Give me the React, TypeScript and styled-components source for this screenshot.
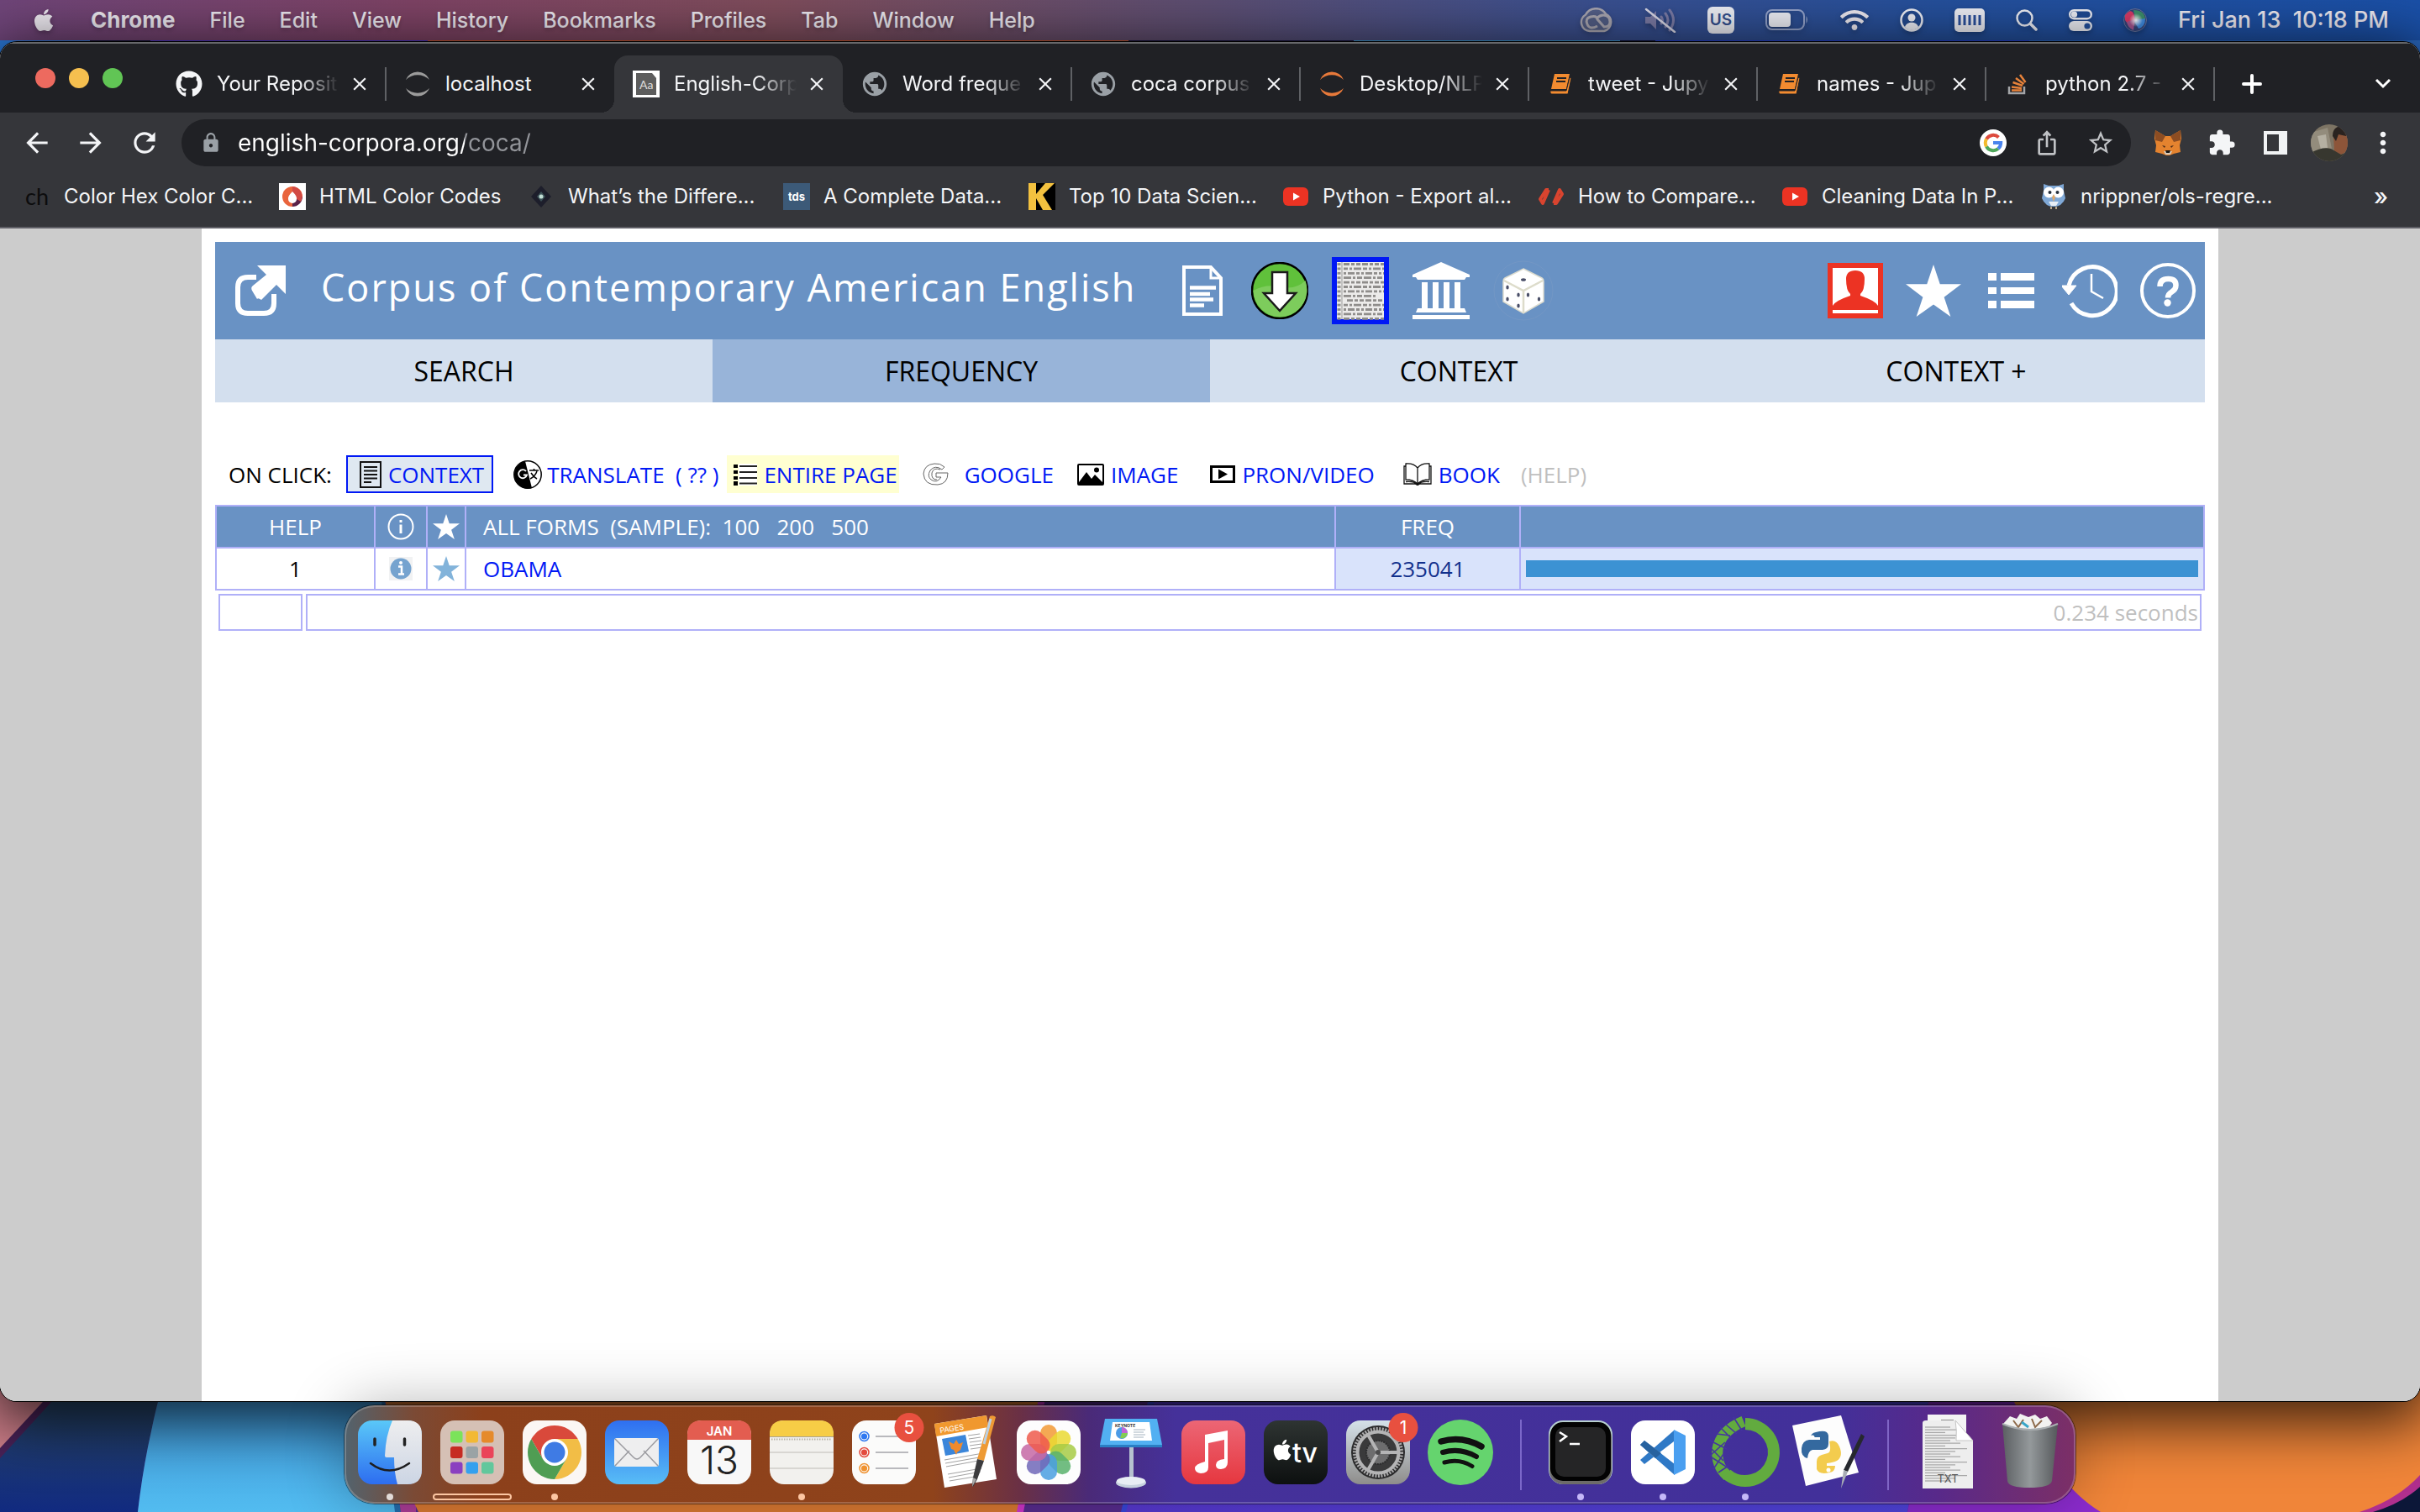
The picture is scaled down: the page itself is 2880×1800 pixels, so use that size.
import React from 'react';
import styled, { createGlobalStyle, css } from 'styled-components';
import { FaApple, FaGithub, FaWifi } from 'react-icons/fa';
import {
  MdArrowBack, MdArrowForward, MdClose, MdExtension, MdIosShare, MdLock,
  MdMoreVert, MdPublic, MdRefresh, MdStarBorder,
} from 'react-icons/md';

const UI = `Inter, "Liberation Sans", sans-serif`;
const PAGE = `"Open Sans", "Noto Sans", sans-serif`;

const c = {
  strip: '#202125',
  bar: '#35363a',
  chromeText: '#f4f5f7',
  header: '#6992c4',
  nav: '#d3dfee',
  navOn: '#98b4d9',
  line: '#b0b0f8',
  link: '#0018f5',
  faint: '#bfbfbf',
};

const Global = createGlobalStyle`
  *, *::before, *::after { box-sizing: border-box; }
  body { margin: 0; background: #14163a; }
  button { border: 0; padding: 0; margin: 0; background: none; color: inherit; font: inherit; }
  a { color: inherit; text-decoration: none; }
  svg { display: block; flex: none; }
`;

const Desktop = styled.div`
  display: flex;
  flex-direction: column;
  min-height: 100vh;
  overflow: hidden;
  font-family: ${UI};
  background: linear-gradient(90deg, #2b78d8 107px, #14163a 107px 179px, #4a35c8 179px 509px,
    #c8562e 509px 1343px, #1a1640 1343px 1611px, #3e9ad0 1611px 1928px, #14163a 1928px 1970px,
    #2540d0 1970px 2415px, #2a68c0 2415px);
`;

/* ---------- menu bar ---------- */

const MenuBar = styled.header`
  display: flex;
  align-items: center;
  justify-content: space-between;
  height: 48px;
  margin-bottom: 2px;
  padding: 0 37px;
  color: #eeeaf1;
  line-height: 32px;
  background: linear-gradient(90deg, #6f4579, #7e4365 17%, #7f4d5c 32%, #5c4e72 50%, #3a5090 66%, #25509c 80%, #1a50a8);
  svg { filter: drop-shadow(0 3px 3px rgba(0, 0, 0, 0.25)); }
`;
const Menus = styled.nav`
  display: flex;
  align-items: center;
  gap: 41px;
`;
const MenuItem = styled.button<{ $bold?: boolean }>`
  font-weight: ${(p) => (p.$bold ? 700 : 500)};
  font-size: ${(p) => (p.$bold ? 26 : 25)}px;
  text-shadow: 0 3px 4px rgba(0, 0, 0, 0.2);
`;
const StatusArea = styled.div`
  display: flex;
  align-items: center;
  gap: 37px;
`;
const Clock = styled.time`
  font-size: 27px;
  font-weight: 500;
  white-space: pre;
`;

/* ---------- browser window ---------- */

const Window = styled.section`
  position: relative;
  z-index: 1;
  display: flex;
  flex: 1;
  flex-direction: column;
  border-radius: 20px;
  overflow: hidden;
  background: #fff;
  box-shadow: 0 0 0 1px #000, 0 16px 70px 10px rgba(0, 0, 0, 0.75);
`;
const TabStrip = styled.div`
  display: flex;
  align-items: flex-end;
  height: 84px;
  padding-left: 42px;
  color: ${c.chromeText};
  background: ${c.strip};
  border-top: 2px solid #67686b;
`;
const Lights = styled.div`
  display: flex;
  gap: 16px;
  width: 145px;
  padding-bottom: 29px;
`;
const Light = styled.button<{ $color: string }>`
  width: 24px;
  height: 24px;
  border-radius: 50%;
  background: ${(p) => p.$color};
`;
const Tab = styled.div<{ $active?: boolean; $line?: boolean }>`
  position: relative;
  display: flex;
  align-items: center;
  width: 272px;
  height: 68px;
  padding: 0 18px 0 22px;
  border-radius: 16px 16px 0 0;
  ${(p) => p.$line && css`
    &::after {
      content: '';
      position: absolute;
      right: -1px;
      top: 14px;
      width: 2px;
      height: 40px;
      background: #5f6165;
    }
  `}
  ${(p) => p.$active && css`
    background: ${c.bar};
    &::before, &::after {
      content: '';
      position: absolute;
      bottom: 0;
      width: 16px;
      height: 16px;
    }
    &::before { left: -16px; background: radial-gradient(circle at 0 0, transparent 16px, ${c.bar} 16px); }
    &::after { right: -16px; background: radial-gradient(circle at 100% 0, transparent 16px, ${c.bar} 16px); }
  `}
`;
const TabIcon = styled.span`
  display: flex;
  flex: none;
  justify-content: center;
  width: 32px;
`;
const TabTitle = styled.button<{ $fade: boolean }>`
  flex: 1;
  min-width: 0;
  margin: 0 8px 0 17px;
  overflow: hidden;
  white-space: nowrap;
  text-align: left;
  font-size: 24px;
  font-weight: 400;
  line-height: 32px;
  ${(p) => p.$fade && css`mask-image: linear-gradient(90deg, #000 66%, transparent 98%);`}
`;
const StripButton = styled.button<{ $end?: boolean }>`
  display: flex;
  align-items: center;
  height: 68px;
  margin-left: ${(p) => (p.$end ? 'auto' : '32px')};
  margin-right: ${(p) => (p.$end ? '33px' : '0')};
`;

const Toolbar = styled.div`
  display: flex;
  align-items: center;
  height: 72px;
  padding: 0 12px;
  color: ${c.chromeText};
  background: ${c.bar};
`;
const ToolButton = styled.button`
  display: flex;
  align-items: center;
  justify-content: center;
  width: 64px;
  height: 56px;
`;
const Omnibox = styled.form`
  display: flex;
  flex: 1;
  align-items: center;
  height: 56px;
  margin: 0 12px;
  padding: 0 4px 0 22px;
  border-radius: 28px;
  color: #c0c2c5;
  background: ${c.strip};
`;
const Address = styled.input`
  flex: 1;
  min-width: 0;
  height: 56px;
  margin-left: 19px;
  padding: 0;
  border: 0;
  outline: 0;
  font: 400 28px/56px ${UI};
  color: #fff;
  background: linear-gradient(90deg, #fff 270px, #93959a 270px);
  background-clip: text;
  -webkit-text-fill-color: transparent;
`;
const BookmarkBar = styled.nav`
  display: flex;
  align-items: center;
  height: 66px;
  padding: 0 38px 8px 28px;
  color: ${c.chromeText};
  background: ${c.bar};
  border-bottom: 2px solid #5f5f66;
`;
const Bookmark = styled.a<{ $w: number }>`
  display: flex;
  align-items: center;
  gap: 16px;
  width: ${(p) => p.$w}px;
  white-space: nowrap;
  font-size: 24px;
  font-weight: 400;
  line-height: 32px;
`;
const More = styled.button`
  margin-left: auto;
  font-size: 28px;
  font-weight: 500;
`;

/* ---------- corpus page ---------- */

const Viewport = styled.main`
  display: flex;
  flex: 1;
  padding: 0 240px;
  background: #ccc;
`;
const Sheet = styled.div`
  flex: 1;
  min-width: 0;
  padding: 16px;
  background: #fff;
  font-family: ${PAGE};
  font-size: 26px;
  line-height: 36px;
  color: #000;
`;
const Banner = styled.header`
  display: flex;
  align-items: center;
  height: 116px;
  padding: 0 11px 0 24px;
  color: #fff;
  background: ${c.header};
`;
const Title = styled.h1`
  margin: 0 49px 8px 42px;
  font-size: 45px;
  font-weight: 500;
  line-height: 60px;
  letter-spacing: 2px;
  white-space: nowrap;
`;
const IconRow = styled.div<{ $right?: boolean }>`
  display: flex;
  align-items: center;
  gap: ${(p) => (p.$right ? 27 : 28)}px;
  ${(p) => p.$right && 'margin-left: auto;'}
`;
const PageTabs = styled.nav`
  display: grid;
  grid-template-columns: repeat(4, 1fr);
  margin-bottom: 63px;
`;
const PageTab = styled.a<{ $on?: boolean }>`
  height: 75px;
  text-align: center;
  font-size: 32px;
  line-height: 76px;
  background: ${(p) => (p.$on ? c.navOn : c.nav)};
`;
const Actions = styled.div`
  display: flex;
  align-items: center;
  height: 45px;
  margin-bottom: 14px;
  padding-left: 16px;
  white-space: pre;
`;
const Action = styled.a<{ $lead: number; $look?: 'boxed' | 'marked'; $gap?: number }>`
  display: flex;
  align-items: center;
  gap: ${(p) => p.$gap ?? 8}px;
  height: 45px;
  margin-left: ${(p) => p.$lead}px;
  color: ${c.link};
  ${(p) => p.$look === 'boxed' && css`
    padding: 0 9px 0 14px;
    border: 2px solid ${c.link};
    background: #dfe8f1;
  `}
  ${(p) => p.$look === 'marked' && css`
    padding: 0 2px 0 8px;
    background: #ffffd1;
  `}
`;
const Hint = styled.a`
  margin-left: 25px;
  color: ${c.faint};
`;
const Results = styled.table`
  width: 100%;
  table-layout: fixed;
  border-collapse: collapse;
  th, td {
    height: 50px;
    padding: 0;
    border: 2px solid ${c.line};
    font-weight: 400;
    text-align: center;
  }
  th { color: #fff; background: ${c.header}; }
  svg { margin: 0 auto; }
`;
const Col = styled.col<{ $w?: number }>`
  ${(p) => p.$w && `width: ${p.$w}px;`}
`;
const WordHead = styled.th`
  && { padding-left: 20px; text-align: left; white-space: pre; }
`;
const WordCell = styled.td`
  && { padding-left: 20px; text-align: left; color: ${c.link}; }
`;
const FreqCell = styled.td`
  color: #12308c;
  background: #d9e3fb;
`;
const BarCell = styled.td`
  && { padding: 0 6px; }
  background: #d9e3fb;
`;
const Bar = styled.div`
  height: 20px;
  background: #3c92d3;
`;
const Timing = styled.footer`
  display: flex;
  gap: 4px;
  padding: 4px;
`;
const TimingBox = styled.div<{ $grow?: boolean }>`
  ${(p) => (p.$grow ? 'flex: 1;' : 'width: 100px;')}
  height: 44px;
  padding: 0 2px;
  border: 2px solid ${c.line};
  color: ${c.faint};
  text-align: right;
  line-height: 40px;
`;

/* ---------- dock ---------- */

const DockArea = styled.footer`
  position: relative;
  display: flex;
  align-items: flex-start;
  justify-content: center;
  height: 132px;
  padding-top: 5px;
`;
const Wallpaper = styled.svg`
  position: absolute;
  left: 0;
  bottom: 0;
  width: 100%;
  height: 156px;
`;
const Dock = styled.nav`
  position: relative;
  z-index: 2;
  display: flex;
  align-items: flex-start;
  padding: 6px 3px 2px;
  border: 2px solid rgba(255, 255, 255, 0.2);
  border-radius: 36px;
  background: linear-gradient(90deg, #52636e, #7b4a35 4%, #8c401b 8%, #8f431b 34%, #6a3045 39%, #4a2a78 43%,
    #45319a 48%, #42309a 86%, #58298a 92%, #7c2f66);
  background-clip: border-box;
  background-origin: border-box;
  box-shadow: 0 0 0 1px rgba(0, 0, 0, 0.45), 0 0 70px rgba(0, 0, 0, 0.3);
`;
const DockItem = styled.button`
  display: flex;
  flex-direction: column;
  align-items: center;
  width: 98px;
  height: 105px;
`;
const Dot = styled.span<{ $wide?: boolean; $tint: string }>`
  width: ${(p) => (p.$wide ? 94 : 8)}px;
  height: 8px;
  margin-top: 1px;
  border-radius: 4px;
  ${(p) => (p.$wide ? `border: 2px solid ${p.$tint};` : `background: ${p.$tint};`)}
`;
const Divider = styled.span`
  width: 2px;
  height: 84px;
  margin: 9px 21px 0 22px;
  background: rgba(170, 150, 240, 0.55);
`;

/* ---------- menu bar icons ---------- */

const CreativeCloud = () => (
  <svg width="40" height="30" viewBox="0 0 40 30" fill="none" stroke="#aaa7b1" strokeWidth="2.500">
    <path d="M12 28a10.500 10.500 0 0 1-5-19.500 14 14 0 0 1 24-1 11 11 0 0 1-2 20.500z" fill="#8f8d99" fillOpacity=".35" />
    <path d="M21 22q-9 5-12-2t4-9 8 3l8 9q7 0 7-6 0-8-8-8-4 0-8 4" strokeWidth="3" />
  </svg>
);
const Muted = () => (
  <svg width="38" height="30" viewBox="0 0 38 30" fill="none" stroke="#7b7ba5" strokeWidth="3" strokeLinecap="round">
    <path d="M1 11h6l7-7v22l-7-7H1z" fill="#7b7ba5" stroke="none" />
    <path d="M20 11q3 4 0 8M25 7q6 8 0 16M30 3q9 12 0 24" />
    <path d="M2 2l34 27" stroke="#d9d8e6" strokeWidth="2.500" />
  </svg>
);
const Badge = styled.span`
  width: 32px;
  border-radius: 6px;
  color: #35508e;
  background: #eeeff6;
  text-align: center;
  font-size: 19px;
  font-weight: 600;
  line-height: 32px;
`;
const Battery = () => (
  <svg width="52" height="26" viewBox="0 0 52 26">
    <rect x="1" y="1" width="45" height="23" rx="7" fill="none" stroke="#94a3cb" strokeWidth="2" />
    <rect x="4" y="4" width="26" height="17" rx="4" fill="#eeeff6" />
    <path d="M48.500 8q3 4 0 9z" fill="#94a3cb" />
  </svg>
);
const UserRing = () => (
  <svg width="28" height="28" viewBox="0 0 28 28" fill="none" stroke="#eeeff6" strokeWidth="2.500">
    <circle cx="14" cy="14" r="12.500" />
    <circle cx="14" cy="11" r="4.500" fill="#eeeff6" stroke="none" />
    <path d="M6 22c2-7 14-7 16 0-4 5-12 5-16 0z" fill="#eeeff6" stroke="none" />
  </svg>
);
const Memory = () => (
  <svg width="36" height="28" viewBox="0 0 36 28">
    <rect width="36" height="28" rx="5" fill="#eeeff6" />
    <path d="M6 8v12M12 8v12M18 8v12M24 8v12M30 8v12" stroke="#2a509c" strokeWidth="3" />
  </svg>
);
const Search = () => (
  <svg width="26" height="26" viewBox="0 0 26 26" fill="none" stroke="#eeeff6" strokeLinecap="round">
    <circle cx="10.500" cy="10.500" r="9" strokeWidth="2.500" />
    <path d="M17.500 17.500l6.500 6.500" strokeWidth="3.500" />
  </svg>
);
const ControlCenter = () => (
  <svg width="28" height="26" viewBox="0 0 28 26">
    <rect x="1.200" y="1.200" width="25.600" height="10" rx="5" fill="none" stroke="#eeeff6" strokeWidth="2.400" />
    <circle cx="6.500" cy="6.200" r="3.600" fill="#eeeff6" />
    <rect y="14" width="28" height="12" rx="6" fill="#eeeff6" />
    <circle cx="22" cy="20" r="3.600" fill="#23509d" />
  </svg>
);
const Siri = () => (
  <svg width="28" height="28" viewBox="0 0 28 28">
    <defs>
      <radialGradient id="siri"><stop offset="0" stopColor="#fff" /><stop offset="1" stopColor="#fff" stopOpacity="0" /></radialGradient>
    </defs>
    <circle cx="14" cy="14" r="13.500" fill="#34457c" stroke="#65739c" />
    <path d="M2 8q10-12 12 6-6 10-12 0z" fill="#d83b67" />
    <path d="M12 2q14 0 14 12l-12-2z" fill="#3d8f6b" />
    <path d="M12 14l14-2q0 10-8 12z" fill="#3f8be0" />
    <path d="M4 16l10-3-2 13q-7-3-8-10z" fill="#a45590" />
    <circle cx="15" cy="14" r="8" fill="url(#siri)" />
  </svg>
);

/* ---------- browser icons ---------- */

const Globe = () => <MdPublic size={34} color="#9aa0a6" />;
const Ring = ({ color }: { color: string }) => (
  <svg width="32" height="32" viewBox="0 0 32 32" fill={color}>
    <path d="M2 11a15 15 0 0 1 28 0 20 20 0 0 0-28 0z" />
    <path d="M2 21a15 15 0 0 0 28 0 20 20 0 0 1-28 0z" />
  </svg>
);
const AaIcon = () => (
  <svg width="32" height="32" viewBox="0 0 32 32">
    <rect width="32" height="32" fill="#fff" />
    <path d="M4 3h19l5 6v20H4z" fill="#5d5d5d" />
    <text x="8" y="22" fontFamily="Lato, sans-serif" fontSize="14" fill="#ddd">Aa</text>
  </svg>
);
const NotebookIcon = () => (
  <svg width="32" height="32" viewBox="0 0 32 32" fill="#f28b30">
    <path d="M9 4h18l-4 18H5z" />
    <path d="M12 9h11M11 13h11" stroke="#202125" strokeWidth="2" />
    <path d="M4 24h19l4-16 2 1-4 19H5q-2-2-1-4z" stroke="#202125" strokeWidth="1" />
  </svg>
);
const StackIcon = () => (
  <svg width="32" height="32" viewBox="0 0 32 32" fill="none" strokeWidth="2.500">
    <path d="M6 19v8h18v-8" stroke="#a3a5a8" />
    <path d="M9 23.500h12M9 19.500l12 1.500M10.500 14l11.500 4M14 9l9.500 7M19 5l6.500 9" stroke="#e7823a" />
  </svg>
);
const GoogleG = () => (
  <svg width="32" height="32" viewBox="0 0 32 32" fill="none" strokeWidth="4">
    <circle cx="16" cy="16" r="16" fill="#fff" />
    <path d="M8 11.500a9.300 9.300 0 0 1 14.500-2" stroke="#dd4b3e" />
    <path d="M8 11.500a9.300 9.300 0 0 0 0 9" stroke="#f3bb2e" />
    <path d="M8 20.500a9.300 9.300 0 0 0 14 2.500" stroke="#4fa75b" />
    <path d="M22 23a9.300 9.300 0 0 0 3.200-7H16" stroke="#4a84ee" />
  </svg>
);
const Fox = () => (
  <svg width="32" height="30" viewBox="0 0 32 30">
    <path d="M1 0l12 7h6l12-7 1 10-2 8 1 8-8 2-5 2h-4l-5-2-8-2 1-8-2-8z" fill="#e4832f" />
    <path d="M1 0l12 7-4 7-8-2zM31 0L19 7l4 7 8-2z" fill="#8d4d22" />
    <path d="M9 18l4 1-1 2zM23 18l-4 1 1 2z" fill="#4a2b18" />
    <path d="M11 25h10l-2 4h-6z" fill="#d8c9b8" />
    <path d="M13 24h6l-1 3h-4z" fill="#161616" />
  </svg>
);
const SidePanel = () => (
  <svg width="28" height="28" viewBox="0 0 28 28"><path fill="#f1f3f4" fillRule="evenodd" d="M0 0h28v28H0zM4 4v20h14V4z" /></svg>
);
const Avatar = () => (
  <svg width="44" height="44" viewBox="0 0 44 44">
    <defs><clipPath id="face"><circle cx="22" cy="22" r="22" /></clipPath></defs>
    <g clipPath="url(#face)">
      <rect width="44" height="44" fill="#7d7464" />
      <path d="M0 10l20-6 6 30H0z" fill="#938c7c" />
      <path d="M8 14l10-2 2 16-8 2z" fill="#b5b0a2" />
      <path d="M27 12q4-8 12-4l5 6v18l-8 4-8-4z" fill="#8d5539" />
      <path d="M26 14q0-12 12-12l6 6-2 6-9-2-3 8z" fill="#2a2320" />
      <path d="M0 34q14-8 24-5l12 7 8-3v11H0z" fill="#37372f" />
    </g>
  </svg>
);
const ChIcon = () => (
  <svg width="32" height="32" viewBox="0 0 32 32"><text x="2" y="26" fontFamily="Lato, sans-serif" fontSize="27" fill="#0c0c0d">ch</text></svg>
);
const CodesIcon = () => (
  <svg width="32" height="32" viewBox="0 0 32 32">
    <rect width="32" height="32" fill="#fff" />
    <path d="M16 4a12 12 0 0 0 0 24z" fill="#e9643c" />
    <path d="M16 4a12 12 0 0 1 12 12H16z" fill="#ef6a3d" />
    <path d="M28 16a12 12 0 0 1-12 12V16z" fill="#5a2148" />
    <path d="M16 4a12 12 0 0 1 10 18l-10-6z" fill="#d24a44" />
    <path d="M16 10q6 6 5 9a5 5 0 0 1-10 0q-1-3 5-9z" fill="#fff" />
  </svg>
);
const GemIcon = () => (
  <svg width="32" height="32" viewBox="0 0 32 32">
    <path d="M16 3l12 13-12 13L4 16z" fill="#1d1e2b" />
    <path d="M16 10l5 6-5 6-5-6z" fill="#3d5358" />
    <circle cx="16" cy="16" r="2.500" fill="#c2e0d6" />
  </svg>
);
const TdsIcon = () => (
  <svg width="32" height="32" viewBox="0 0 32 32">
    <rect width="32" height="32" fill="#3c5a78" />
    <text x="16" y="21" textAnchor="middle" fontFamily="Inter, sans-serif" fontWeight="700" fontSize="13" fill="#fff">tds</text>
  </svg>
);
const KIcon = () => (
  <svg width="32" height="32" viewBox="0 0 32 32">
    <rect width="32" height="32" fill="#000" />
    <path d="M0 0h9v13L20 0h11L17 14l11 18H17L9 18v14H0z" fill="#f3c13f" />
  </svg>
);
const TubeIcon = () => (
  <svg width="32" height="32" viewBox="0 0 32 32">
    <rect x="1" y="5" width="30" height="22" rx="6" fill="#ec3323" />
    <path d="M13 11.500l8 4.500-8 4.500z" fill="#fff" />
  </svg>
);
const SlashIcon = () => (
  <svg width="32" height="32" viewBox="0 0 32 32" fill="none" stroke="#d9442f" strokeWidth="4" strokeLinejoin="round">
    <path d="M13 8h-3L3 19l3 5 7-16" />
    <path d="M19 24h3l7-11-3-5-7 16" />
  </svg>
);
const OwlIcon = () => (
  <svg width="32" height="32" viewBox="0 0 32 32">
    <path d="M4 1l6 2h12l6-2v8l2 9q-4 10-14 10T2 18l2-9z" fill="#7fa8d6" />
    <circle cx="10.500" cy="11" r="6.500" fill="#fff" /><circle cx="21.500" cy="11" r="6.500" fill="#fff" />
    <circle cx="11.500" cy="11" r="2" fill="#26303c" /><circle cx="20.500" cy="11" r="2" fill="#26303c" />
    <path d="M16 13l2 4-2 5-2-5z" fill="#e0a86a" />
    <path d="M10 22h12l-3 5h-6z" fill="#e8eef5" />
    <path d="M13 28v3M19 28v3" stroke="#b9a68a" strokeWidth="2" />
  </svg>
);

/* ---------- corpus page icons ---------- */

const ShareOut = () => (
  <svg width="60" height="60" viewBox="0 0 60 60">
    <path d="M25 14H15q-12 0-12 12v19q0 12 12 12h19q12 0 12-12V34" fill="none" stroke="#fff" strokeWidth="6" />
    <path d="M26 0h34v34L49 23 31 41q-4-3-5-1l-6-10q-2-4 1-6l16-13z" fill="#fff" />
  </svg>
);
const DocIcon = () => (
  <svg width="60" height="60" viewBox="0 0 60 60" fill="none" stroke="#fff">
    <path d="M8 2h32l12 13v43H8z" strokeWidth="4" />
    <path d="M40 2v13h13" strokeWidth="3" />
    <path d="M15 26.500h31M15 34h24M15 40.500h28M15 47.500h17" strokeWidth="4.500" />
  </svg>
);
const DownloadIcon = () => (
  <svg width="68" height="68" viewBox="0 0 68 68">
    <circle cx="34" cy="34" r="33" fill="#60c13b" stroke="#000" strokeWidth="2.500" />
    <path d="M2.500 34q14-8 30-5 20 5 32-7a32 32 0 1 1-62 12z" fill="#7dcc5c" />
    <path d="M25 12h18v25h10L34 58 15 37h10z" fill="#fff" stroke="#1a1a1a" strokeWidth="2.500" />
  </svg>
);
const NewsIcon = () => {
  const rows = Array.from({ length: 13 }, (_, i) => i);
  return (
    <svg width="68" height="80" viewBox="0 0 68 80">
      <rect width="68" height="80" fill={c.link} />
      <rect x="6" y="6" width="56" height="68" fill="#ecebea" />
      <path d="M12 6v68" stroke="#999" />
      {rows.map((i) => (
        <g key={i} stroke="#8f8d8b" strokeWidth="2.800">
          <path d={`M6.500 ${8.500 + i * 5.400}h4`} />
          <path
            d={`M${i === 8 ? 18 : 14} ${8.500 + i * 5.400}H${i === 7 ? 52 : 62}`}
            strokeDasharray={['7 2 4 2 5 2', '5 2 3 2 9 2', '3 2 8 2 4 2', '9 2 3 2 6 2'][i % 4]}
          />
        </g>
      ))}
    </svg>
  );
};
const BankIcon = () => (
  <svg width="68" height="68" viewBox="0 0 68 68" fill="#fff">
    <path d="M34 0l34 15v3h-4l-2 3H6l-2-3H0v-3z" />
    <path d="M11 24h7v31h-7zM24 24h7v31h-7zM37 24h7v31h-7zM50 24h7v31h-7z" />
    <path d="M6 55h56l2 5H4zM0 63h68v5H0z" />
  </svg>
);
const DiceIcon = () => (
  <svg width="72" height="72" viewBox="0 0 72 72">
    <circle cx="36" cy="36" r="35" fill="none" stroke="#7397c5" />
    <path d="M36 10l22 11q2 1 2 4v24L36 63 12 49V25q0-3 2-4z" fill="#fff" stroke="#dcdccf" strokeWidth="1.500" />
    <path d="M13 24l23 12 23-12M36 36v26" fill="none" stroke="#dddccb" strokeWidth="2.500" />
    <g fill="#4a4f68">
      <ellipse cx="36" cy="23" rx="3" ry="1.800" />
      <ellipse cx="17" cy="32" rx="1.700" ry="2.500" /><ellipse cx="30" cy="41" rx="1.700" ry="2.500" />
      <ellipse cx="17" cy="46" rx="1.700" ry="2.500" /><ellipse cx="30" cy="54" rx="1.700" ry="2.500" />
      <ellipse cx="41.500" cy="41" rx="1.700" ry="2.500" /><ellipse cx="54.500" cy="46" rx="1.700" ry="2.500" />
    </g>
  </svg>
);
const PersonIcon = () => (
  <svg width="66" height="66" viewBox="0 0 66 66">
    <rect x="3" y="3" width="60" height="60" fill="#fff" stroke="#ec3323" strokeWidth="6" />
    <path d="M22 19q0-10 11-10t11 10q0 14-5 18v2q18 6 21 12v5H6v-5q3-6 21-12v-2q-5-4-5-18z" fill="#ec3323" />
  </svg>
);
const Star = ({ size, color }: { size: number; color: string }) => (
  <svg width={size} height={size} viewBox="0 0 68 66"><path fill={color} d="M34 1l8 24h26L47 41l8 24-21-15-21 15 8-24L0 25h26z" /></svg>
);
const ListIcon = () => (
  <svg width="66" height="66" viewBox="0 0 66 66" fill="#fff">
    <path d="M5 12h10v9H5zM20 12h40v9H20zM5 29h10v8H5zM20 29h40v8H20zM5 45h10v9H5zM20 45h40v9H20z" />
  </svg>
);
const HistoryIcon = () => (
  <svg width="66" height="66" viewBox="0 0 66 66" fill="none" stroke="#fff">
    <path d="M8 27a29 29 0 1 1 3 21" strokeWidth="5" />
    <path d="M-1 27h18L8 38z" fill="#fff" strokeWidth="1" />
    <path d="M35 13v21l14 8" strokeWidth="2.500" />
  </svg>
);
const QuestionIcon = () => (
  <svg width="66" height="66" viewBox="0 0 66 66" fill="none" stroke="#fff">
    <circle cx="33" cy="33" r="31" strokeWidth="4" />
    <path d="M23.500 28q0-9 10-9 9 0 9 7.500 0 5-5 8-4.500 2.500-4.500 7" strokeWidth="6.500" />
    <circle cx="32.500" cy="47.500" r="4.200" fill="#fff" stroke="none" />
  </svg>
);
const ContextGlyph = () => (
  <svg width="26" height="32" viewBox="0 0 26 32" fill="none" stroke="#111" strokeWidth="2">
    <rect x="1" y="1" width="24" height="30" />
    <path d="M5 7h16M5 11.500h16M5 16h16M5 20.500h16M5 25h9" />
  </svg>
);
const TranslateGlyph = () => (
  <svg width="34" height="34" viewBox="0 0 34 34">
    <circle cx="17" cy="17" r="16.200" fill="#fff" stroke="#000" strokeWidth="1.500" />
    <path d="M14 1l8 32A16.500 16.500 0 1 1 14 1z" fill="#000" />
    <path d="M15 13a5 5 0 1 0 1 4.500h-4" fill="none" stroke="#fff" strokeWidth="1.800" />
    <path d="M19 12h11M24.500 10v2M28 13q-2 6-8 9M21 15q3 5 7 7" fill="none" stroke="#000" strokeWidth="1.500" />
  </svg>
);
const ListGlyph = () => (
  <svg width="28" height="26" viewBox="0 0 28 26">
    <rect x="6" width="22" height="26" fill="#fff" />
    <path d="M7 3h21M7 10h21M7 17h21M7 23.500h21" stroke="#222" strokeWidth="2" />
    <path d="M0 1h5v4H0zM0 8h5v4H0zM0 15h5v4H0zM0 21h5v5H0z" fill="#000" />
  </svg>
);
const GoogleGlyph = () => (
  <svg width="32" height="27" viewBox="0 0 32 27" fill="none" stroke="#666" strokeWidth="1">
    <path d="M26 5l-3 3q-8-6-14 1-4 7 1 11 7 5 12-3h-6v-5h14q0 13-12 14-16 1-17-13Q2 2 14 1q7-1 12 4z" />
    <path d="M21 8q-8-3-10 4-1 8 6 8" />
  </svg>
);
const ImageGlyph = () => (
  <svg width="32" height="26" viewBox="0 0 32 26">
    <rect x="1" y="1" width="30" height="24" rx="1" fill="#fff" stroke="#000" strokeWidth="2" />
    <path d="M2 22l9-12 6 8 4-5 9 9v3H2z" fill="#000" />
    <circle cx="23" cy="7.500" r="3" fill="#000" />
  </svg>
);
const VideoGlyph = () => (
  <svg width="30" height="21" viewBox="0 0 30 21">
    <rect x="1.500" y="1.500" width="27" height="18" fill="#fff" stroke="#000" strokeWidth="3" />
    <path d="M10 4.500l11 6-11 6z" fill="#000" />
  </svg>
);
const BookGlyph = () => (
  <svg width="34" height="27" viewBox="0 0 34 27" fill="none" stroke="#111" strokeWidth="1.300">
    <path d="M17 6q-5-6-14-5v19q9 0 14 5 5-5 14-5V1q-9-1-14 5zM17 6v19" />
    <path d="M3 4H1v21h13l3 1.500 3-1.500h13V4h-2M3 22.500q9-1 14 3 5-4 14-3" />
  </svg>
);
const InfoOutline = () => (
  <svg width="32" height="32" viewBox="0 0 32 32" fill="none" stroke="#fff" strokeWidth="2">
    <circle cx="16" cy="16" r="14.500" />
    <path d="M16 13.500V24" strokeWidth="3" /><path d="M16 8v3" strokeWidth="3" />
  </svg>
);
const InfoSolid = () => (
  <svg width="28" height="28" viewBox="0 0 28 28">
    <rect width="28" height="28" fill="#f1f2f3" />
    <circle cx="14" cy="14" r="12.500" fill="#75a3cf" />
    <path d="M11 11.500h4v9M11 20.500h7" stroke="#fff" strokeWidth="2.500" fill="none" />
    <circle cx="14" cy="7" r="2" fill="#fff" />
  </svg>
);

/* ---------- dock icons: every tile is 76 units wide, with room around it ---------- */

const Icon = ({ children }: { children: React.ReactNode }) => (
  <svg width="96" height="96" viewBox="-10 -10 96 96">{children}</svg>
);
const Tile = ({ fill }: { fill: string }) => <rect width="76" height="76" rx="17" fill={fill} />;
const Count = ({ n }: { n: string }) => (
  <>
    <circle cx="68" cy="8.500" r="17.500" fill="#e8503f" />
    <text x="68" y="16" textAnchor="middle" fontFamily={UI} fontSize="21" fill="#fff">{n}</text>
  </>
);

const Finder = () => (
  <Icon>
    <defs>
      <linearGradient id="fb" x2="0" y2="1"><stop stopColor="#5ac8f8" /><stop offset="1" stopColor="#2d6df0" /></linearGradient>
      <linearGradient id="fw" x2="0" y2="1"><stop stopColor="#eeeeef" /><stop offset="1" stopColor="#ccd5e4" /></linearGradient>
    </defs>
    <Tile fill="url(#fb)" />
    <path d="M41 0h18q17 0 17 17v42q0 17-17 17H47q-4-14-4-32H34q-2 0-2-2 1-24 9-42z" fill="url(#fw)" />
    <path d="M20 22v7M55.500 22v7" stroke="#222" strokeWidth="3.500" strokeLinecap="round" />
    <path d="M15 51q22 17 46 0" fill="none" stroke="#1d1d1f" strokeWidth="2.500" strokeLinecap="round" />
  </Icon>
);
const pads = ['#7be35a', '#f2b935', '#e58a2b', '#c62b22', '#9aa3a5', '#ea4459', '#8a3fc0', '#35a0ee', '#62c79c'];
const Launchpad = () => (
  <Icon>
    <Tile fill="#d5c0b5" />
    {pads.map((f, i) => <rect key={f} x={12 + (i % 3) * 18.500} y={12.500 + Math.floor(i / 3) * 18.500} width="14.500" height="14" rx="3" fill={f} />)}
  </Icon>
);
const ChromeApp = () => (
  <Icon>
    <Tile fill="#fbf7f4" />
    <path d="M10.300 22A32 32 0 0 1 65.700 22H38L24.100 46z" fill="#d9493b" />
    <path d="M65.700 22A32 32 0 0 1 38 70l13.900-24L38 22z" fill="#f2bd46" />
    <path d="M38 70A32 32 0 0 1 10.300 22l13.800 24h27.800z" fill="#4f9d53" />
    <circle cx="38" cy="38" r="16" fill="#fff" /><circle cx="38" cy="38" r="12.500" fill="#3f7be4" />
  </Icon>
);
const Mail = () => (
  <Icon>
    <defs><linearGradient id="ml" x2="0" y2="1"><stop stopColor="#2f6ff0" /><stop offset="1" stopColor="#58bdf6" /></linearGradient></defs>
    <Tile fill="url(#ml)" />
    <rect x="11" y="21" width="53" height="34" rx="3" fill="#eeeeef" />
    <path d="M12 54l17-18M63 54L46 36M12 22l22 22q4 4 8 0l21-22" fill="none" stroke="#9b9ba0" strokeWidth="1.500" />
  </Icon>
);
const Calendar = () => (
  <Icon>
    <Tile fill="#f8f8f8" />
    <path d="M0 23v-6Q0 0 17 0h42q17 0 17 17v6z" fill="#e35d50" />
    <text x="38" y="18" textAnchor="middle" fontFamily={UI} fontWeight="600" fontSize="15" fill="#fff">JAN</text>
    <text x="38" y="64" textAnchor="middle" fontFamily={UI} fontWeight="300" fontSize="46" fill="#222">13</text>
  </Icon>
);
const Notes = () => (
  <Icon>
    <Tile fill="#f2f1ee" />
    <path d="M0 19v-2Q0 0 17 0h42q17 0 17 17v2z" fill="#f7cd46" />
    <path d="M0 19.500h76" stroke="#a8a294" /><path d="M2 22.500h72" stroke="#b8b4a8" strokeWidth="2" strokeDasharray="1.500 1.500" />
    <path d="M0 38h76M0 57h76" stroke="#cfcdc9" strokeWidth="1.500" />
  </Icon>
);
const Reminders = () => (
  <Icon>
    <Tile fill="#fbfbfa" />
    {['#2f78f0', '#e34a3e', '#ef9230'].map((f, i) => (
      <g key={f} fill="none">
        <circle cx="14.500" cy={19 + i * 19} r="5.500" stroke={f} strokeWidth="1.500" /><circle cx="14.500" cy={19 + i * 19} r="3.600" fill={f} />
        <path d={`M28 ${19 + i * 19}h39`} stroke="#b9b9bd" strokeWidth="1.800" />
      </g>
    ))}
    <Count n="5" />
  </Icon>
);
const Pages = () => (
  <Icon>
    <path d="M0 4L62-6l12 76-62 10z" fill="#fff" />
    <path d="M0 4L62-6l2 14L2 19z" fill="#f0982f" />
    <text transform="rotate(-9 8 15)" x="7" y="15" fontFamily={UI} fontSize="9" fill="#fff">PAGES</text>
    <path d="M9 22l28-5 4 20-28 5z" fill="#3b86da" />
    <path d="M20 34l-3-9 6 3 3-5 3 5 5-2-3 9-4 3-1 3-3-6z" fill="#f08a2c" />
    <path d="M40 18l14-2M41 22l14-2M42 26l14-2M42 30l14-2M43 34l14-2M12 47l46-8M13 51l46-8M14 55l38-7M16 64l40-7M17 68l38-7M18 72l30-5" stroke="#a5a5a5" strokeWidth="1.200" />
    <path d="M66-5q4-2 7 1L59 48l-8-2z" fill="#ee9a34" />
    <path d="M67-2l-8 30" stroke="#bcd0e2" strokeWidth="3" />
    <path d="M51 46l8 2-8 22-5 9-1-1 1-10z" fill="#3c3c3e" />
    <path d="M46 68l4 2-5 9z" fill="#aaa" />
  </Icon>
);
const petals = ['#f29a35', '#ead933', '#a7cb45', '#59b26c', '#4a9fe0', '#7067b8', '#c667a4', '#ef5a4c'];
const Photos = () => (
  <Icon>
    <Tile fill="#fdfdfd" />
    {petals.map((f, i) => <rect key={f} x="28" y="5" width="20" height="31" rx="10" fill={f} opacity=".85" transform={`rotate(${i * 45} 38 38)`} />)}
    <circle cx="38" cy="38" r="2" fill="#fff" />
  </Icon>
);
const Keynote = () => (
  <Icon>
    <path d="M36 31h5v42h-5z" fill="#b6c2cf" />
    <ellipse cx="38" cy="74" rx="18" ry="6.500" fill="#c6d2de" /><ellipse cx="38" cy="72" rx="17" ry="5" fill="#e8eef4" />
    <path d="M7-2h62l6 31H1z" fill="#52b0f2" /><path d="M1 29h74v3H1z" fill="#2a7fc4" />
    <path d="M16 2h44l3 22H13z" fill="#fff" />
    <text x="19" y="7.500" fontFamily={UI} fontWeight="700" fontSize="5" fill="#333">KEYNOTE</text>
    <circle cx="27" cy="15" r="7" fill="#4b9be6" /><path d="M27 15V8a7 7 0 0 1 7 7z" fill="#c165d6" /><path d="M27 15h7a7 7 0 0 1-9 6z" fill="#84cc52" />
    <path d="M41 11h14M41 14h12M41 17h14M41 20h12" stroke="#a6b3bf" strokeWidth="1.200" />
  </Icon>
);
const Music = () => (
  <Icon>
    <defs><linearGradient id="mu" x2="0" y2="1"><stop stopColor="#ec6675" /><stop offset="1" stopColor="#e6373f" /></linearGradient></defs>
    <Tile fill="url(#mu)" />
    <path d="M28 17l27-5v38q0 7-8 8-6 0-6-5 0-6 10-7V23l-19 4v29q0 7-9 7-7-1-7-6t12-8z" fill="#fff" />
  </Icon>
);
const TvApp = () => (
  <Icon>
    <defs><linearGradient id="tv" x2="0" y2="1"><stop stopColor="#2e3432" /><stop offset="1" stopColor="#0d1010" /></linearGradient></defs>
    <Tile fill="url(#tv)" />
    <FaApple x={8} y={21} size={28} color="#fff" />
    <text x="34" y="50" fontFamily={UI} fontWeight="500" fontSize="32" fill="#fff">tv</text>
  </Icon>
);
const Settings = () => (
  <Icon>
    <defs><linearGradient id="st" x2="0" y2="1"><stop stopColor="#d5e1e9" /><stop offset="1" stopColor="#8e8d8b" /></linearGradient></defs>
    <Tile fill="url(#st)" />
    <circle cx="38" cy="38" r="32" fill="#2b2b2c" />
    <circle cx="38" cy="38" r="28" fill="none" stroke="#a9a9aa" strokeWidth="4" strokeDasharray="2 1.500" />
    <circle cx="38" cy="38" r="24.500" fill="#3a3a3b" stroke="#b4b4b5" strokeWidth="4" />
    <circle cx="38" cy="38" r="14" fill="#6d6d6e" stroke="#2c2c2d" strokeWidth="2" strokeDasharray="2 1" />
    <path d="M38 38h24M38 38L26 17M38 38L26 59" stroke="#b4b4b5" strokeWidth="4" />
    <circle cx="38" cy="38" r="3" fill="#4b4b4c" />
    <Count n="1" />
  </Icon>
);
const Spotify = () => (
  <Icon>
    <circle cx="38" cy="38" r="39" fill="#65d46e" />
    <g fill="none" stroke="#111" strokeLinecap="round">
      <path d="M15 25q25-7 48 6" strokeWidth="7.500" /><path d="M17 38q21-6 40 5" strokeWidth="6" /><path d="M19 50q18-5 33 4.500" strokeWidth="5" />
    </g>
  </Icon>
);
const Terminal = () => (
  <Icon>
    <rect width="76" height="76" rx="17" fill="#b8d0d0" /><rect x="1" y="4" width="74" height="72" rx="16" fill="#6d6b69" />
    <rect x="2" y="2" width="72" height="70" rx="15" fill="#030303" /><rect x="8" y="8" width="60" height="59" rx="10" fill="#252526" />
    <path d="M13 14l8 5-8 6" fill="none" stroke="#fff" strokeWidth="2.500" /><path d="M25 28h12" stroke="#fff" strokeWidth="2.500" />
  </Icon>
);
const Code = () => (
  <Icon>
    <Tile fill="#fff" />
    <path d="M11 29l5-5 36 28v13zM11 47l5 5 35-27V12z" fill="#2f79c6" />
    <path d="M51 11l14 7v40l-14 7z" fill="#4a9ff0" /><path d="M11 29l5-5 20 15-7 6z" fill="#27629f" />
  </Icon>
);
const Anaconda = () => (
  <Icon>
    <path d="M38 4a34 34 0 1 1-22 60" fill="none" stroke="#62ab3f" strokeWidth="14" />
    <path d="M17 66Q3 54 5 34 9 12 36 1" fill="none" stroke="#62ab3f" strokeWidth="13" />
    <path d="M-4 24l20 10M-4 42l18-16M0 58l12-18M8 8l14 14M-2 44l22 14M14 4l14 12M24-4l10 16M-2 34l14 14M6 62l12-8M4 16l16 2" stroke="#4535a0" strokeWidth="1.600" />
  </Icon>
);
const Idle = () => (
  <Icon>
    <path d="M-4 6L54-6l21 68L12 78z" fill="#fdfdfd" />
    <path d="M24 14q14-4 15 4v10q0 6-7 7H20q-5 1-6 10-8-2-7-12 1-9 9-10h13v-3H18q0-5 6-6z" fill="#34699f" />
    <path d="M40 25q8-3 12 6 5 12-3 17-4 2-12 3v3h10q0 7-7 8-12 3-15-4v-9q0-6 6-8l7-2q5-1 2-14z" fill="#f3cc4e" />
    <circle cx="20" cy="20" r="2.500" fill="#fff" /><circle cx="39" cy="59" r="2.500" fill="#fff" />
    <path d="M78 16l4 3-20 42-5-2z" fill="#26282e" /><path d="M57 59l5 2-8 20z" fill="#a8adb5" />
  </Icon>
);
const TextFile = () => (
  <Icon>
    <path d="M14-7h46v30H14z" fill="#f4f4f4" />
    <path d="M30 1h15" stroke="#222" strokeWidth="3" />
    <path d="M8 3q0-3 4-3h35l21 24v57H8z" fill="#eeeeee" />
    {Array.from({ length: 21 }, (_, i) => (
      <path key={i} d={`M11 ${8 + i * 3.200}h${[30, 42, 24, 50, 36][i % 5]}`} stroke="#a8a8a8" strokeWidth="1.300" />
    ))}
    <path d="M47 0q2 12 1 24h20z" fill="#fff" stroke="#c4c4c4" />
    <text x="38" y="74" textAnchor="middle" fontFamily={UI} fontSize="13" fill="#555">TXT</text>
  </Icon>
);
const Trash = () => (
  <Icon>
    <defs><linearGradient id="tr"><stop stopColor="#5b5f62" /><stop offset=".5" stopColor="#94999b" /><stop offset="1" stopColor="#55585b" /></linearGradient></defs>
    <path d="M6 4L14-5l8 3L26-8l10 4 8-3 6 5 8-3 6 8-6 8H12z" fill="#f2f2f0" />
    <path d="M18 0l6 8 6-9M40-2l4 10 8-8" fill="none" stroke="#8d6a4a" strokeWidth="2" /><path d="M28 2l8 6" stroke="#3aa6c8" strokeWidth="3" />
    <path d="M5 4q33 12 66 0l-7 68q-2 8-27 8t-26-8z" fill="url(#tr)" />
    <path d="M5 4q33 14 66 0" fill="none" stroke="#a8adaf" strokeWidth="2" />
  </Icon>
);

/* ---------- data ---------- */

const menus = ['File', 'Edit', 'View', 'History', 'Bookmarks', 'Profiles', 'Tab', 'Window', 'Help'];

const tabs = [
  { title: 'Your Reposit', icon: <FaGithub size={32} />, line: true },
  { title: 'localhost', icon: <Ring color="#9b9b9b" /> },
  { title: 'English-Corp', icon: <AaIcon />, active: true },
  { title: 'Word freque', icon: <Globe />, line: true },
  { title: 'coca corpus', icon: <Globe />, line: true },
  { title: 'Desktop/NLP', icon: <Ring color="#e7793a" />, line: true },
  { title: 'tweet - Jupy', icon: <NotebookIcon />, line: true },
  { title: 'names - Jup', icon: <NotebookIcon />, line: true },
  { title: 'python 2.7 -', icon: <StackIcon />, line: true },
];

const bookmarks = [
  { label: 'Color Hex Color C...', icon: <ChIcon />, w: 304 },
  { label: 'HTML Color Codes', icon: <CodesIcon />, w: 296 },
  { label: 'What’s the Differe...', icon: <GemIcon />, w: 304 },
  { label: 'A Complete Data...', icon: <TdsIcon />, w: 292 },
  { label: 'Top 10 Data Scien...', icon: <KIcon />, w: 302 },
  { label: 'Python - Export al...', icon: <TubeIcon />, w: 304 },
  { label: 'How to Compare...', icon: <SlashIcon />, w: 290 },
  { label: 'Cleaning Data In P...', icon: <TubeIcon />, w: 308 },
  { label: 'nrippner/ols-regre...', icon: <OwlIcon />, w: 290 },
];

type App = { name: string; art: React.ReactNode; dot?: string; wide?: boolean };
const warm = '#fcc6a2';
const cool = '#c5b8f8';
const apps: App[] = [
  { name: 'Finder', art: <Finder />, dot: '#e2dbd8' },
  { name: 'Launchpad', art: <Launchpad />, dot: warm, wide: true },
  { name: 'Google Chrome', art: <ChromeApp />, dot: warm },
  { name: 'Mail', art: <Mail /> },
  { name: 'Calendar', art: <Calendar /> },
  { name: 'Notes', art: <Notes />, dot: warm },
  { name: 'Reminders', art: <Reminders /> },
  { name: 'Pages', art: <Pages /> },
  { name: 'Photos', art: <Photos /> },
  { name: 'Keynote', art: <Keynote /> },
  { name: 'Music', art: <Music /> },
  { name: 'TV', art: <TvApp /> },
  { name: 'System Preferences', art: <Settings /> },
  { name: 'Spotify', art: <Spotify /> },
];
const devApps: App[] = [
  { name: 'Terminal', art: <Terminal />, dot: cool },
  { name: 'Visual Studio Code', art: <Code />, dot: cool },
  { name: 'Anaconda', art: <Anaconda />, dot: cool },
  { name: 'IDLE', art: <Idle /> },
];
const places: App[] = [
  { name: 'Document', art: <TextFile /> },
  { name: 'Trash', art: <Trash /> },
];

const DockApps = ({ items }: { items: App[] }) => (
  <>
    {items.map((a) => (
      <DockItem key={a.name} aria-label={a.name}>
        {a.art}
        {a.dot && <Dot $tint={a.dot} $wide={a.wide} />}
      </DockItem>
    ))}
  </>
);

const Backdrop = () => (
  <Wallpaper viewBox="0 0 2880 156" preserveAspectRatio="none">
    <defs>
      <linearGradient id="navy" x2="0" y2="1"><stop stopColor="#2b4a63" /><stop offset="1" stopColor="#112a80" /></linearGradient>
      <linearGradient id="sky" x2="0" y2="1"><stop stopColor="#3c93d8" /><stop offset="1" stopColor="#52bcf0" /></linearGradient>
      <linearGradient id="indigo"><stop stopColor="#5a3ad6" /><stop offset="1" stopColor="#5145e0" /></linearGradient>
    </defs>
    <rect width="2880" height="156" fill="#5a2d92" />
    <path d="M0 0h76L0 82z" fill="#cf7f8a" />
    <path d="M74 0h12L0 94V80z" fill="#4a2258" />
    <path d="M84 0h112q-8 20-16 60-10 44-16 96H0V92z" fill="url(#navy)" />
    <path d="M196 0h256l20 156H164q6-52 16-96 8-40 16-60z" fill="url(#sky)" />
    <path d="M451 0h4l22 156h-7z" fill="#256fb0" />
    <path d="M455 0h40v156h-18z" fill="#b03e9a" />
    <path d="M455 0h785l-28 156H498q-30-60-43-156z" fill="#e07c33" />
    <path d="M1240 0h8l-30 156h-8z" fill="#d637cf" />
    <path d="M1372 0h8l-38 156h-8z" fill="#3a48e0" />
    <path d="M1380 0h920l-30 156h-930z" fill="url(#indigo)" />
    <path d="M2300 0h90l120 156h-240z" fill="#8d2cd0" />
    <path d="M2385 0h495v156h-380q-60-36-115-156z" fill="#f08539" />
    <path d="M2880 112v44h-72q44-14 72-44z" fill="#b02f8e" />
    <path d="M2880 126v30h-56q34-10 56-30z" fill="#0c1738" />
  </Wallpaper>
);

export default function App() {
  return (
    <Desktop>
      <Global />
      <MenuBar>
        <Menus>
          <FaApple size={30} />
          <MenuItem $bold>Chrome</MenuItem>
          {menus.map((m) => <MenuItem key={m}>{m}</MenuItem>)}
        </Menus>
        <StatusArea>
          <CreativeCloud />
          <Muted />
          <Badge>US</Badge>
          <Battery />
          <FaWifi size={34} />
          <UserRing />
          <Memory />
          <Search />
          <ControlCenter />
          <Siri />
          <Clock>{'Fri Jan 13  10:18 PM'}</Clock>
        </StatusArea>
      </MenuBar>

      <Window>
        <TabStrip>
          <Lights>
            <Light $color="#ed6a5f" aria-label="Close" />
            <Light $color="#f5bf4f" aria-label="Minimise" />
            <Light $color="#61c555" aria-label="Zoom" />
          </Lights>
          {tabs.map((t) => (
            <Tab key={t.title} $active={t.active} $line={t.line}>
              <TabIcon>{t.icon}</TabIcon>
              <TabTitle $fade={t.title !== 'localhost'}>{t.title}</TabTitle>
              <button aria-label="Close tab"><MdClose size={26} /></button>
            </Tab>
          ))}
          <StripButton aria-label="New tab">
            <svg width="26" height="26" viewBox="0 0 26 26" stroke="#fff" strokeWidth="4" strokeLinecap="round"><path d="M13 3v20M3 13h20" /></svg>
          </StripButton>
          <StripButton $end aria-label="Search tabs">
            <svg width="22" height="14" viewBox="0 0 22 14" fill="none" stroke="#fff" strokeWidth="3"><path d="M3 2l8 8 8-8" /></svg>
          </StripButton>
        </TabStrip>

        <Toolbar>
          <ToolButton aria-label="Back"><MdArrowBack size={38} /></ToolButton>
          <ToolButton aria-label="Forward"><MdArrowForward size={38} /></ToolButton>
          <ToolButton aria-label="Reload"><MdRefresh size={38} /></ToolButton>
          <Omnibox>
            <MdLock size={26} color="#9aa0a6" />
            <Address aria-label="Address" defaultValue="english-corpora.org/coca/" />
            <ToolButton type="button" aria-label="Google"><GoogleG /></ToolButton>
            <ToolButton type="button" aria-label="Share"><MdIosShare size={32} /></ToolButton>
            <ToolButton type="button" aria-label="Bookmark"><MdStarBorder size={34} /></ToolButton>
          </Omnibox>
          <ToolButton aria-label="MetaMask"><Fox /></ToolButton>
          <ToolButton aria-label="Extensions"><MdExtension size={34} /></ToolButton>
          <ToolButton aria-label="Side panel"><SidePanel /></ToolButton>
          <ToolButton aria-label="Profile"><Avatar /></ToolButton>
          <ToolButton aria-label="More"><MdMoreVert size={40} /></ToolButton>
        </Toolbar>

        <BookmarkBar>
          {bookmarks.map((b) => (
            <Bookmark key={b.label} href="#" $w={b.w}>{b.icon}{b.label}</Bookmark>
          ))}
          <More aria-label="More bookmarks">»</More>
        </BookmarkBar>

        <Viewport>
          <Sheet>
            <Banner>
              <ShareOut />
              <Title>Corpus of Contemporary American English</Title>
              <IconRow>
                <DocIcon />
                <DownloadIcon />
                <NewsIcon />
                <BankIcon />
                <DiceIcon />
              </IconRow>
              <IconRow $right>
                <PersonIcon />
                <Star size={66} color="#fff" />
                <ListIcon />
                <HistoryIcon />
                <QuestionIcon />
              </IconRow>
            </Banner>
            <PageTabs>
              <PageTab href="#">SEARCH</PageTab>
              <PageTab href="#" $on>FREQUENCY</PageTab>
              <PageTab href="#">CONTEXT</PageTab>
              <PageTab href="#">CONTEXT +</PageTab>
            </PageTabs>
            <Actions>
              ON CLICK:
              <Action href="#" $lead={17} $look="boxed"><ContextGlyph />CONTEXT</Action>
              <Action href="#" $lead={24} $gap={6}><TranslateGlyph />{'TRANSLATE  ( ?? )'}</Action>
              <Action href="#" $lead={10} $look="marked"><ListGlyph />ENTIRE PAGE</Action>
              <Action href="#" $lead={28} $gap={18}><GoogleGlyph />GOOGLE</Action>
              <Action href="#" $lead={28}><ImageGlyph />IMAGE</Action>
              <Action href="#" $lead={38}><VideoGlyph />PRON/VIDEO</Action>
              <Action href="#" $lead={34}><BookGlyph />BOOK</Action>
              <Hint href="#">(HELP)</Hint>
            </Actions>
            <Results>
              <colgroup>
                <Col $w={189} /><Col $w={62} /><Col $w={46} /><Col $w={1035} /><Col $w={220} /><Col />
              </colgroup>
              <thead>
                <tr>
                  <th>HELP</th>
                  <th><InfoOutline /></th>
                  <th><Star size={32} color="#fff" /></th>
                  <WordHead>{'ALL FORMS  (SAMPLE):  100   200   500'}</WordHead>
                  <th>FREQ</th>
                  <th aria-label="Share" />
                </tr>
              </thead>
              <tbody>
                <tr>
                  <td>1</td>
                  <td><InfoSolid /></td>
                  <td><Star size={32} color="#82b3da" /></td>
                  <WordCell><a href="#">OBAMA</a></WordCell>
                  <FreqCell>235041</FreqCell>
                  <BarCell><Bar /></BarCell>
                </tr>
              </tbody>
            </Results>
            <Timing>
              <TimingBox />
              <TimingBox $grow>0.234 seconds</TimingBox>
            </Timing>
          </Sheet>
        </Viewport>
      </Window>

      <DockArea>
        <Backdrop />
        <Dock>
          <DockApps items={apps} />
          <Divider />
          <DockApps items={devApps} />
          <Divider />
          <DockApps items={places} />
        </Dock>
      </DockArea>
    </Desktop>
  );
}
